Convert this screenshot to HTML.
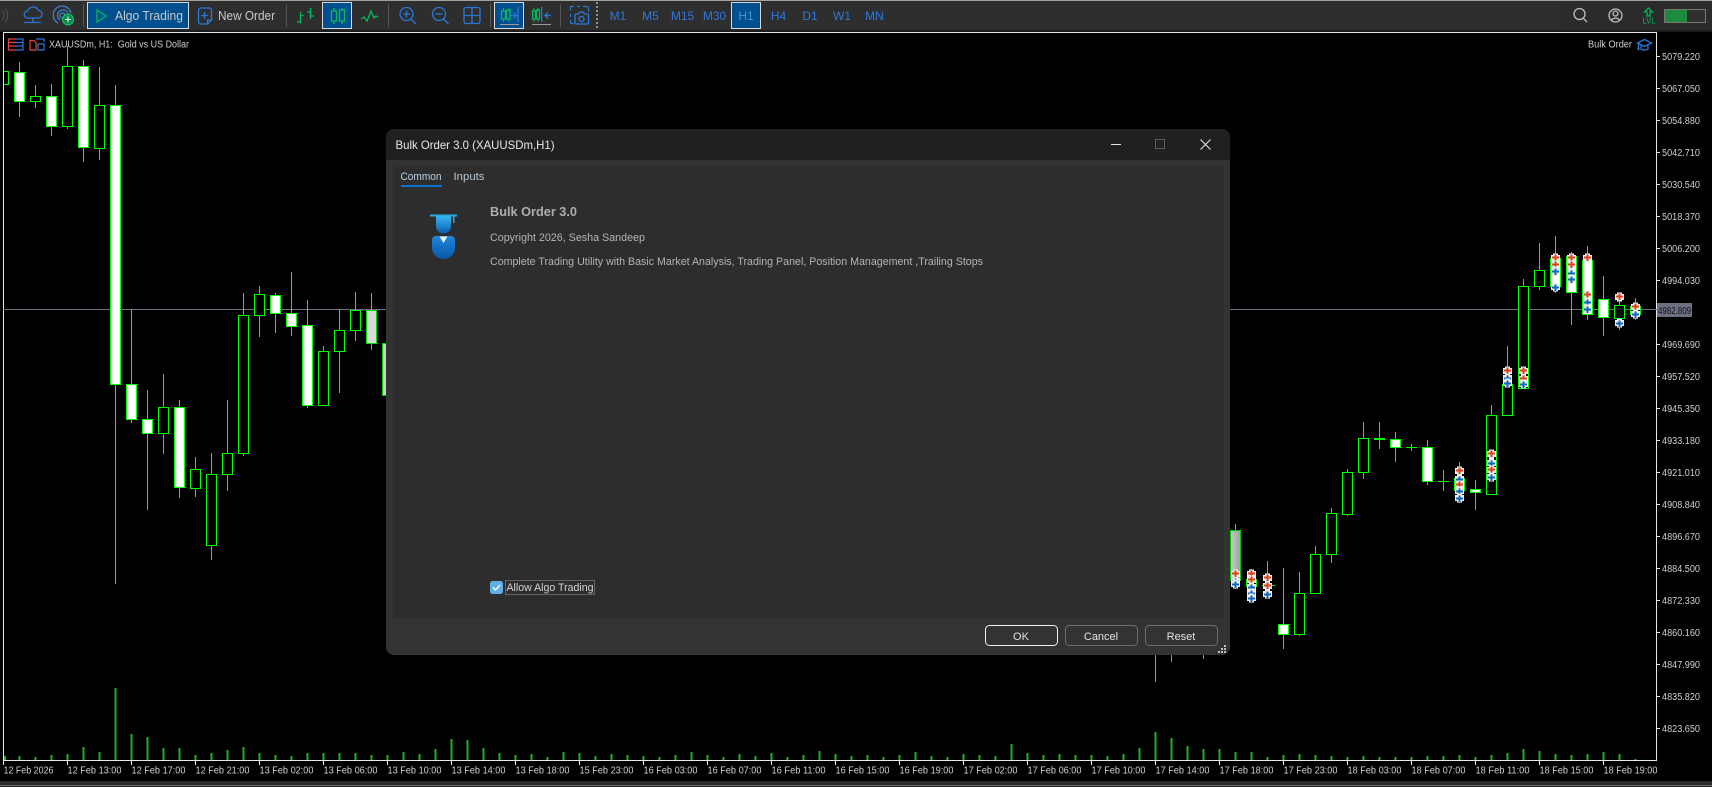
<!DOCTYPE html>
<html><head><meta charset="utf-8"><title>Bulk Order 3.0</title>
<style>html,body{margin:0;padding:0;background:#000;width:1712px;height:787px;overflow:hidden}svg{display:block}text{font-family:"Liberation Sans",sans-serif}</style></head>
<body>
<svg xmlns="http://www.w3.org/2000/svg" width="1712" height="787" viewBox="0 0 1712 787">
<defs>
<linearGradient id="g1" x1="0" x2="1"><stop offset="0" stop-color="#c8c8c8"/><stop offset="1" stop-color="#a0a0a0"/></linearGradient>
<linearGradient id="hd" x1="0" x2="0" y1="0" y2="1"><stop offset="0" stop-color="#35b4f0"/><stop offset="1" stop-color="#0a5cb0"/></linearGradient>
<linearGradient id="bd" x1="0" x2="0" y1="0" y2="1"><stop offset="0" stop-color="#1f86dc"/><stop offset="1" stop-color="#0a56a6"/></linearGradient>
<g id="r"><path d="M-2.500-4.500h5v1.500h2v6h-2v1.500h-5v-1.500h-2v-6h2z" fill="#eee"/><path d="M-1-3.500h2v2h2.500v2h-2.500v2.500h-2v-2.500h-2.500v-2h2.500z" fill="#e0401e"/></g>
<g id="b"><path d="M-2.500-4.500h5v1.500h2v6h-2v1.500h-5v-1.500h-2v-6h2z" fill="#eee"/><path d="M-1-2.500h2v2h2.500v2h-2.500v2.500h-2v-2.500h-2.500v-2h2.500z" fill="#0d66b8"/></g>
</defs>
<rect width="1712" height="787" fill="#000"/>

<!-- toolbar -->
<rect width="1712" height="30" fill="#2e2e2e"/>
<rect x="1560" width="152" height="30" fill="#2b2b2b"/>
<rect width="1712" height="1" fill="#a0a0a0"/>
<rect y="30" width="1712" height="2" fill="#1c1c1c"/>
<g shape-rendering="crispEdges">
<rect x="83" y="4" width="1" height="23" fill="#555"/><rect x="286" y="4" width="1" height="23" fill="#555"/><rect x="388" y="4" width="1" height="23" fill="#555"/><rect x="490" y="4" width="1" height="23" fill="#555"/><rect x="560" y="4" width="1" height="23" fill="#555"/>
<rect x="87.500" y="2.500" width="101" height="26" fill="#00508f" stroke="#d8d8d8"/>
<rect x="322.500" y="2.500" width="29" height="26" fill="#00508f" stroke="#d8d8d8"/>
<rect x="494.500" y="2.500" width="29" height="26" fill="#00508f" stroke="#d8d8d8"/>
<rect x="731.500" y="2.500" width="29" height="26" fill="#00508f" stroke="#d8d8d8"/>
</g>
<path d="M597 2v28" stroke="#b0b0b0" stroke-width="1.500" stroke-dasharray="2 2"/>
<path d="M2 11a6 6 0 0 1 0 9M5 9a9 9 0 0 1 0 13" stroke="#555" fill="none"/>
<g fill="none" stroke="#2a78d6" stroke-width="1.300">
<path d="M28 18a3.500 3.500 0 0 1-.500-7a6 6 0 0 1 11-.500a3.800 3.800 0 0 1 .500 7.500z"/><path d="M33 18v4M24 22.500h17"/>
<path d="M58 23a9 9 0 1 1 13-10M60 20a5.500 5.500 0 1 1 8-7M62 18a2.500 2.500 0 1 1 3-3" stroke="#3a7fc8"/>
<path d="M198.500 10a2 2 0 0 1 2-2h9a2 2 0 0 1 2 2v10l-4 4h-7a2 2 0 0 1-2-2zM207.500 24v-4h4M204.500 12v7M201 15.500h7"/>
<circle cx="406.500" cy="14" r="6.500"/><path d="M411 19l5 5M403 14h7M406.500 10.500v7"/>
<circle cx="439" cy="14" r="6.500"/><path d="M443.500 19l5 5M435.500 14h7"/>
<rect x="464" y="7.500" width="16" height="16" rx="2"/><path d="M472 7.500v16M464 15.500h16"/>
<path d="M518 7v15M510 15.500h6M513.500 12.500l3 3-3 3M541.700 7v15M551 15.500h-6M548 12.500l-3 3 3 3"/>
<path d="M574 6.500h-2.500a1 1 0 0 0-1 1v3M577 6.500h3M583 6.500h3.500a2 2 0 0 1 2 2v3M570.500 14v3M570.500 20v2.500a1 1 0 0 0 1 1h2" stroke-width="1.200"/>
<path d="M576 14h2.500l1.500-2h3l1.500 2h3a1 1 0 0 1 1 1v8a1 1 0 0 1-1 1h-11.500a1 1 0 0 1-1-1v-8a1 1 0 0 1 1-1z"/><circle cx="581.500" cy="19" r="2.500"/>
</g>
<g fill="none" stroke="#08b860" stroke-width="1.300">
<path d="M97 10l9 6-9 6z"/>
<path d="M300.500 12v11M297 22h3.500M300.500 15.500h3M310.500 8v11M307 12h3.500M310.500 16h3.500"/>
<path d="M334 8v3M334 21v3M342 8v2M342 21v3"/><rect x="331.500" y="11" width="5" height="10"/><rect x="339.500" y="10" width="5" height="11"/>
<path d="M361 19l3-2 3 4 4-10 3 7 2-2 2 1"/>
<path d="M503.500 8v3M503.500 19v3M509 8v3M509 19v3" stroke-width="1"/><rect x="501.500" y="11" width="4" height="8"/><rect x="506.500" y="10" width="3.500" height="9"/>
<path d="M534 8v3M534 19v3M538 8v3M538 19v3" stroke-width="1"/><rect x="532.500" y="11" width="3" height="8"/><rect x="536.500" y="10" width="3" height="9"/>
</g>
<path d="M500 24.500h19M532 24.500h19" stroke="#999" stroke-width="1"/>
<circle cx="68" cy="19.500" r="5.500" fill="#0c8a4c" stroke="#15c46c"/><path d="M68 16.500v6M65 19.500h6" stroke="#cfe" stroke-width="1"/>
<g font-size="13" fill="#c9c9c9">
<text x="115" y="20" textLength="68" lengthAdjust="spacingAndGlyphs">Algo Trading</text>
<text x="218" y="20" textLength="57" lengthAdjust="spacingAndGlyphs">New Order</text>
</g>
<g font-size="12" fill="#2f78dc" text-anchor="middle">
<text x="618" y="20">M1</text><text x="650.500" y="20">M5</text><text x="682.500" y="20">M15</text><text x="714.500" y="20">M30</text>
<text x="746" y="20" fill="#4a90e0">H1</text><text x="778.500" y="20">H4</text><text x="810" y="20">D1</text><text x="842" y="20">W1</text><text x="874.500" y="20">MN</text>
</g>
<g fill="none" stroke="#bdbdbd" stroke-width="1.300">
<circle cx="1579.500" cy="14" r="5.500"/><path d="M1583.500 18.500l3.500 3.500"/>
<circle cx="1615.500" cy="15.500" r="6.500"/><circle cx="1615.500" cy="13.500" r="2.500"/><path d="M1611 20.500a5 4 0 0 1 9 0"/>
</g>
<path d="M1648.500 8l4 4h-2.500v4h-3v-4h-2.500z" fill="none" stroke="#08b860" stroke-width="1.200"/>
<text x="1642.500" y="23.500" font-size="8" fill="#08b860" textLength="13" lengthAdjust="spacingAndGlyphs">LVL</text>
<g shape-rendering="crispEdges"><rect x="1664.500" y="9.500" width="41" height="13" fill="#2e2e2e" stroke="#777"/><rect x="1665" y="10" width="22" height="12" fill="#1e8a3c"/></g>

<!-- chart frame -->
<g shape-rendering="crispEdges">
<path d="M3.500 32.500H1656.500V760.500H3.500z" fill="#000" stroke="#e8e8e8"/>
<path d="M3 309.500H1657" stroke="#6c7080"/>
<path d="M3.500 760v5M67.500 760v5M131.500 760v5M195.500 760v5M259.500 760v5M323.500 760v5M387.500 760v5M451.500 760v5M515.500 760v5M579.500 760v5M643.500 760v5M707.500 760v5M771.500 760v5M835.500 760v5M899.500 760v5M963.500 760v5M1027.500 760v5M1091.500 760v5M1155.500 760v5M1219.500 760v5M1283.500 760v5M1347.500 760v5M1411.500 760v5M1475.500 760v5M1539.500 760v5M1603.500 760v5" stroke="#e8e8e8"/>
<path d="M1656 56.500h4M1656 88.500h4M1656 120.500h4M1656 152.500h4M1656 184.500h4M1656 216.500h4M1656 248.500h4M1656 280.500h4M1656 344.500h4M1656 376.500h4M1656 408.500h4M1656 440.500h4M1656 472.500h4M1656 504.500h4M1656 536.500h4M1656 568.500h4M1656 600.500h4M1656 632.500h4M1656 664.500h4M1656 696.500h4M1656 728.500h4" stroke="#e8e8e8"/>
<rect y="781" width="1712" height="6" fill="#2b2b2b"/><rect y="785" width="1712" height="1" fill="#666"/>

<!-- volumes -->
<path fill="none" stroke="#20b020" stroke-width="2" d="M5 760v-4M19.500 760v-4M35.500 760v-3M51.500 760v-5M67.500 760v-6M83.500 760v-13M99.500 760v-8M115.500 760v-72M131.500 760v-26M147.500 760v-23M163.500 760v-12M179.500 760v-12M195.500 760v-5M211.500 760v-7M227.500 760v-10M243.500 760v-13M259.500 760v-7M275.500 760v-5M291.500 760v-4M307.500 760v-7M323.500 760v-7M339.500 760v-7M355.500 760v-7M371.500 760v-5M387.500 760v-5M403.500 760v-8M419.500 760v-6M435.500 760v-11M451.500 760v-21M467.500 760v-20M483.500 760v-12M499.500 760v-7M515.500 760v-5M531.500 760v-6M547.500 760v-3M563.500 760v-8M579.500 760v-7M595.500 760v-4M611.500 760v-6M627.500 760v-5M643.500 760v-4M659.500 760v-3M675.500 760v-5M691.500 760v-8M707.500 760v-5M723.500 760v-3M739.500 760v-6M755.500 760v-4M771.500 760v-7M787.500 760v-3M803.500 760v-5M819.500 760v-9M835.500 760v-6M851.500 760v-4M867.500 760v-5M883.500 760v-3M899.500 760v-5M915.500 760v-8M931.500 760v-4M947.500 760v-3M963.500 760v-6M979.500 760v-5M995.500 760v-4M1011.500 760v-16M1027.500 760v-7M1043.500 760v-5M1059.500 760v-6M1075.500 760v-5M1091.500 760v-5M1107.500 760v-4M1123.500 760v-6M1139.500 760v-12M1155.500 760v-28M1171.500 760v-22M1187.500 760v-14M1203.500 760v-11M1219.500 760v-11M1235.500 760v-8M1251.500 760v-8M1267.500 760v-3M1283.500 760v-5M1299.500 760v-6M1315.500 760v-5M1331.500 760v-4M1347.500 760v-3M1363.500 760v-4M1379.500 760v-3M1395.500 760v-3M1411.500 760v-3M1427.500 760v-4M1443.500 760v-4M1459.500 760v-5M1475.500 760v-3M1491.500 760v-5M1507.500 760v-7M1523.500 760v-11M1539.500 760v-9M1555.500 760v-6M1571.500 760v-5M1587.500 760v-6M1603.500 760v-8M1619.500 760v-6M1635.500 760v-1"/>

<!-- wicks -->
<path fill="none" stroke="#00ff00" d="M19.500 62V117M35.500 85V108M51.500 84V136M67.500 46V129M83.500 60V162M99.500 67V160M115.500 85V584M131.500 309V423M147.500 390V510M163.500 374V454M179.500 400V498M195.500 457V497M211.500 453V560M227.500 400V491M243.500 293V456M259.500 286V337M275.500 293V333M291.500 272V336M307.500 300V408M323.500 346V405M339.500 309V393M355.500 292V341M371.500 293V350M1155.500 640V682M1171.500 640V662M1203.500 640V659M1235.500 524V589M1251.500 569V600M1267.500 561V598M1283.500 568V649M1299.500 572V636M1315.500 546V594M1331.500 508V563M1347.500 469V516M1363.500 422V479M1379.500 422V449M1395.500 432V462M1411.500 444V451M1427.500 440V485M1443.500 470V491M1459.500 462V503M1475.500 480V510M1491.500 405V495M1507.500 346V415M1523.500 279V388M1539.500 243V290M1555.500 236V293M1571.500 252V325M1587.500 246V320M1603.500 276V336M1619.500 293V330M1635.500 298V320"/>
<!-- hollow bodies -->
<path fill="#000" stroke="#00ff00" d="M4 71.500H8.500V84.500H4M30.500 96.500H40.500V101.500H30.500ZM62.500 66.500H72.500V126.500H62.500ZM94.500 105.500H104.500V148.500H94.500ZM158.500 407.500H168.500V433.500H158.500ZM190.500 469.500H200.500V488.500H190.500ZM206.500 474.500H216.500V545.500H206.500ZM222.500 453.500H232.500V474.500H222.500ZM238.500 315.500H248.500V453.500H238.500ZM254.500 294.500H264.500V315.500H254.500ZM318.500 351.500H328.500V405.500H318.500ZM334.500 330.500H344.500V351.500H334.500ZM350.500 310.500H360.500V330.500H350.500ZM1294.500 593.500H1304.500V634.500H1294.500ZM1310.500 554.500H1320.500V593.500H1310.500ZM1326.500 513.500H1336.500V554.500H1326.500ZM1342.500 472.500H1352.500V514.500H1342.500ZM1358.500 438.500H1368.500V472.500H1358.500ZM1454.500 478.500H1464.500V490.500H1454.500ZM1486.500 415.500H1496.500V494.500H1486.500ZM1502.500 384.500H1512.500V415.500H1502.500ZM1518.500 286.500H1528.500V388.500H1518.500ZM1534.500 270.500H1544.500V286.500H1534.500ZM1614.500 305.500H1624.500V318.500H1614.500ZM1630.500 306.500H1640.500V314.500H1630.500ZM1246.500 579.500H1256.500V586.500H1246.500Z"/>
<!-- white bodies -->
<path fill="#fff" stroke="#00ff00" d="M14.500 72.500H24.500V101.500H14.500ZM46.500 96.500H56.500V126.500H46.500ZM78.500 66.500H88.500V147.500H78.500ZM110.500 105.500H120.500V384.500H110.500ZM126.500 384.500H136.500V419.500H126.500ZM142.500 419.500H152.500V433.500H142.500ZM174.500 407.500H184.500V487.500H174.500ZM270.500 295.500H280.500V313.500H270.500ZM286.500 313.500H296.500V326.500H286.500ZM302.500 325.500H312.500V405.500H302.500ZM1278.500 624.500H1288.500V634.500H1278.500ZM1390.500 439.500H1400.500V447.500H1390.500ZM1422.500 447.500H1432.500V481.500H1422.500ZM1470.500 489.500H1480.500V492.500H1470.500ZM1550.500 258.500H1560.500V286.500H1550.500ZM1566.500 256.500H1576.500V292.500H1566.500ZM1582.500 260.500H1592.500V314.500H1582.500ZM1598.500 299.500H1608.500V317.500H1598.500Z"/>
<path fill="#d9d9d9" stroke="#00e000" d="M366.500 310.500H376.500V343.500H366.500Z"/>
<path fill="#d0d0d0" stroke="#00c800" d="M382.500 343.500H392.500V395.500H382.500Z"/>
<path fill="url(#g1)" stroke="#00c800" d="M1230.500 530.500H1240.500V580.500H1230.500Z"/>
<!-- dojis -->
<path fill="none" stroke="#00ff00" d="M1374 439.500H1385M1374 438.500H1385M1406 447.500H1417M1438 481.500H1449M1262 585.500H1275"/>
</g>

<!-- markers -->
<g>
<use href="#r" x="1251.500" y="574"/><use href="#r" x="1251.500" y="580"/><use href="#b" x="1251.500" y="587"/><use href="#b" x="1251.500" y="593"/><use href="#b" x="1251.500" y="598"/>
<use href="#r" x="1267.500" y="578"/><use href="#r" x="1267.500" y="586"/><use href="#b" x="1267.500" y="594"/>
<use href="#b" x="1235.500" y="581"/><use href="#b" x="1235.500" y="584"/><use href="#r" x="1235.500" y="574"/>
<use href="#r" x="1459.500" y="471"/><use href="#b" x="1459.500" y="479"/><use href="#r" x="1459.500" y="485"/><use href="#b" x="1459.500" y="491"/><use href="#b" x="1459.500" y="498"/>
<use href="#r" x="1491.500" y="454"/><use href="#b" x="1491.500" y="463"/><use href="#r" x="1491.500" y="470"/><use href="#b" x="1491.500" y="477"/>
<use href="#r" x="1507.500" y="371"/><use href="#b" x="1507.500" y="378"/><use href="#b" x="1507.500" y="383"/>
<use href="#r" x="1523.500" y="371"/><use href="#r" x="1523.500" y="379"/><use href="#b" x="1523.500" y="384"/>
<use href="#r" x="1555.500" y="258"/><use href="#r" x="1555.500" y="265"/><use href="#b" x="1555.500" y="271"/><use href="#b" x="1555.500" y="287"/>
<use href="#r" x="1571.500" y="258"/><use href="#r" x="1571.500" y="265"/><use href="#b" x="1571.500" y="273"/><use href="#b" x="1571.500" y="279"/>
<use href="#r" x="1587.500" y="258"/><use href="#r" x="1587.500" y="295"/><use href="#b" x="1587.500" y="302"/><use href="#b" x="1587.500" y="309"/>
<use href="#r" x="1619.500" y="297"/><use href="#b" x="1619.500" y="323"/>
<use href="#r" x="1635.500" y="307"/><use href="#b" x="1635.500" y="314"/>
</g>

<!-- chart header -->
<g fill="none" stroke-width="1.200">
<path d="M15.500 39h-7v11h7M8.500 42.500h7M8.500 46h7" stroke="#e8453c"/><path d="M15.500 39h7.500v11h-7.500M15.500 42.500h7.500M15.500 46h7.500" stroke="#2a78d6"/>
<path d="M30 40.500h4l2 2v7.500h-6z" stroke="#e8453c"/><path d="M38 44h6v6h-6zM38 39h6v3M36 39h2v-.100" stroke="#2a78d6"/>
</g>
<text x="49" y="47.500" font-size="10" fill="#cfcfcf" textLength="140" lengthAdjust="spacingAndGlyphs" xml:space="preserve">XAUUSDm, H1:  Gold vs US Dollar</text>
<text x="1588" y="47.500" font-size="10" fill="#cfcfcf" textLength="44" lengthAdjust="spacingAndGlyphs">Bulk Order</text>
<g fill="none" stroke="#2a78d6" stroke-width="1.300"><path d="M1637.500 43l7-3.500 7 3.500-7 3.500zM1641 45.500v3.500a4 2 0 0 0 7 0v-3.500M1638.500 44v4.500"/></g><circle cx="1638.500" cy="49" r="1.200" fill="#2a78d6"/>

<!-- price axis -->
<g font-size="10" fill="#cfcfcf">
<text x="1662" y="60" textLength="38" lengthAdjust="spacingAndGlyphs">5079.220</text>
<text x="1662" y="92" textLength="38" lengthAdjust="spacingAndGlyphs">5067.050</text>
<text x="1662" y="124" textLength="38" lengthAdjust="spacingAndGlyphs">5054.880</text>
<text x="1662" y="156" textLength="38" lengthAdjust="spacingAndGlyphs">5042.710</text>
<text x="1662" y="188" textLength="38" lengthAdjust="spacingAndGlyphs">5030.540</text>
<text x="1662" y="220" textLength="38" lengthAdjust="spacingAndGlyphs">5018.370</text>
<text x="1662" y="252" textLength="38" lengthAdjust="spacingAndGlyphs">5006.200</text>
<text x="1662" y="284" textLength="38" lengthAdjust="spacingAndGlyphs">4994.030</text>
<text x="1662" y="348" textLength="38" lengthAdjust="spacingAndGlyphs">4969.690</text>
<text x="1662" y="380" textLength="38" lengthAdjust="spacingAndGlyphs">4957.520</text>
<text x="1662" y="412" textLength="38" lengthAdjust="spacingAndGlyphs">4945.350</text>
<text x="1662" y="444" textLength="38" lengthAdjust="spacingAndGlyphs">4933.180</text>
<text x="1662" y="476" textLength="38" lengthAdjust="spacingAndGlyphs">4921.010</text>
<text x="1662" y="508" textLength="38" lengthAdjust="spacingAndGlyphs">4908.840</text>
<text x="1662" y="540" textLength="38" lengthAdjust="spacingAndGlyphs">4896.670</text>
<text x="1662" y="572" textLength="38" lengthAdjust="spacingAndGlyphs">4884.500</text>
<text x="1662" y="604" textLength="38" lengthAdjust="spacingAndGlyphs">4872.330</text>
<text x="1662" y="636" textLength="38" lengthAdjust="spacingAndGlyphs">4860.160</text>
<text x="1662" y="668" textLength="38" lengthAdjust="spacingAndGlyphs">4847.990</text>
<text x="1662" y="700" textLength="38" lengthAdjust="spacingAndGlyphs">4835.820</text>
<text x="1662" y="732" textLength="38" lengthAdjust="spacingAndGlyphs">4823.650</text>
</g>
<rect x="1657" y="303" width="35" height="14" fill="#6c7080"/>
<text x="1658" y="314" font-size="10" fill="#10121a" textLength="33" lengthAdjust="spacingAndGlyphs">4982.809</text>

<!-- time axis -->
<g font-size="10" fill="#cfcfcf">
<text x="3.500" y="773.500" textLength="50" lengthAdjust="spacingAndGlyphs">12 Feb 2026</text>
<text x="67.500" y="773.500" textLength="54" lengthAdjust="spacingAndGlyphs">12 Feb 13:00</text>
<text x="131.500" y="773.500" textLength="54" lengthAdjust="spacingAndGlyphs">12 Feb 17:00</text>
<text x="195.500" y="773.500" textLength="54" lengthAdjust="spacingAndGlyphs">12 Feb 21:00</text>
<text x="259.500" y="773.500" textLength="54" lengthAdjust="spacingAndGlyphs">13 Feb 02:00</text>
<text x="323.500" y="773.500" textLength="54" lengthAdjust="spacingAndGlyphs">13 Feb 06:00</text>
<text x="387.500" y="773.500" textLength="54" lengthAdjust="spacingAndGlyphs">13 Feb 10:00</text>
<text x="451.500" y="773.500" textLength="54" lengthAdjust="spacingAndGlyphs">13 Feb 14:00</text>
<text x="515.500" y="773.500" textLength="54" lengthAdjust="spacingAndGlyphs">13 Feb 18:00</text>
<text x="579.500" y="773.500" textLength="54" lengthAdjust="spacingAndGlyphs">15 Feb 23:00</text>
<text x="643.500" y="773.500" textLength="54" lengthAdjust="spacingAndGlyphs">16 Feb 03:00</text>
<text x="707.500" y="773.500" textLength="54" lengthAdjust="spacingAndGlyphs">16 Feb 07:00</text>
<text x="771.500" y="773.500" textLength="54" lengthAdjust="spacingAndGlyphs">16 Feb 11:00</text>
<text x="835.500" y="773.500" textLength="54" lengthAdjust="spacingAndGlyphs">16 Feb 15:00</text>
<text x="899.500" y="773.500" textLength="54" lengthAdjust="spacingAndGlyphs">16 Feb 19:00</text>
<text x="963.500" y="773.500" textLength="54" lengthAdjust="spacingAndGlyphs">17 Feb 02:00</text>
<text x="1027.500" y="773.500" textLength="54" lengthAdjust="spacingAndGlyphs">17 Feb 06:00</text>
<text x="1091.500" y="773.500" textLength="54" lengthAdjust="spacingAndGlyphs">17 Feb 10:00</text>
<text x="1155.500" y="773.500" textLength="54" lengthAdjust="spacingAndGlyphs">17 Feb 14:00</text>
<text x="1219.500" y="773.500" textLength="54" lengthAdjust="spacingAndGlyphs">17 Feb 18:00</text>
<text x="1283.500" y="773.500" textLength="54" lengthAdjust="spacingAndGlyphs">17 Feb 23:00</text>
<text x="1347.500" y="773.500" textLength="54" lengthAdjust="spacingAndGlyphs">18 Feb 03:00</text>
<text x="1411.500" y="773.500" textLength="54" lengthAdjust="spacingAndGlyphs">18 Feb 07:00</text>
<text x="1475.500" y="773.500" textLength="54" lengthAdjust="spacingAndGlyphs">18 Feb 11:00</text>
<text x="1539.500" y="773.500" textLength="54" lengthAdjust="spacingAndGlyphs">18 Feb 15:00</text>
<text x="1603.500" y="773.500" textLength="54" lengthAdjust="spacingAndGlyphs">18 Feb 19:00</text>
</g>

<!-- dialog -->
<rect x="386" y="129" width="844" height="526" rx="8" fill="#333"/>
<path d="M386 160V137a8 8 0 0 1 8-8H1222a8 8 0 0 1 8 8V160z" fill="#202020"/>
<rect x="393" y="167" width="831" height="451" fill="#2d2d2d"/>
<text x="395.500" y="149" font-size="12" fill="#e8e8e8" textLength="159" lengthAdjust="spacingAndGlyphs">Bulk Order 3.0 (XAUUSDm,H1)</text>
<path d="M1111 144.500h10" stroke="#e6e6e6" shape-rendering="crispEdges"/>
<rect x="1155.500" y="139.500" width="9" height="9" fill="none" stroke="#5c5c5c" shape-rendering="crispEdges"/>
<path d="M1200.500 139.500l10 10M1210.500 139.500l-10 10" stroke="#dcdcdc" stroke-width="1.200"/>
<text x="400.500" y="180" font-size="11" fill="#bcd0e0" textLength="41" lengthAdjust="spacingAndGlyphs">Common</text>
<text x="453.500" y="180" font-size="11" fill="#b8c4ce" textLength="31" lengthAdjust="spacingAndGlyphs">Inputs</text>
<rect x="401" y="185" width="41" height="2" fill="#0a72d0"/>

<!-- logo -->
<rect x="430" y="214.500" width="27" height="2" fill="#29abe2"/>
<rect x="453" y="216" width="1.500" height="7" fill="#29abe2"/>
<path d="M436 216.500h15v10a7.500 7 0 0 1-15 0z" fill="url(#hd)"/>
<path d="M432 240a4 4 0 0 1 4-4h15a4 4 0 0 1 4 4v8a11.500 11 0 0 1-23 0z" fill="url(#bd)"/>
<path d="M439.500 236.500h8l-4 6.500z" fill="#e8f4fc"/>

<text x="490" y="216" font-size="13" font-weight="bold" fill="#aeaeae" textLength="87" lengthAdjust="spacingAndGlyphs">Bulk Order 3.0</text>
<text x="490" y="241" font-size="11" fill="#b4b4b4" textLength="155" lengthAdjust="spacingAndGlyphs">Copyright 2026, Sesha Sandeep</text>
<text x="490" y="265" font-size="11" fill="#b4b4b4" textLength="493" lengthAdjust="spacingAndGlyphs">Complete Trading Utility with Basic Market Analysis, Trading Panel, Position Management ,Trailing Stops</text>

<rect x="490" y="581" width="13" height="13" rx="2.500" fill="#62aee6"/>
<path d="M493 587.500l2.500 2.500 4.500-5" fill="none" stroke="#fff" stroke-width="1.300"/>
<rect x="505.500" y="580.500" width="89" height="14" fill="none" stroke="#999" stroke-dasharray="1 1"/>
<text x="506.500" y="591" font-size="11" fill="#d4d4d4" textLength="87" lengthAdjust="spacingAndGlyphs">Allow Algo Trading</text>

<rect x="985.500" y="625.500" width="72" height="20" rx="4" fill="#333" stroke="#f0f0f0"/>
<rect x="1065.500" y="625.500" width="72" height="20" rx="4" fill="#333" stroke="#6e6e6e"/>
<rect x="1145.500" y="625.500" width="72" height="20" rx="4" fill="#333" stroke="#6e6e6e"/>
<g font-size="11" fill="#e0e0e0" text-anchor="middle">
<text x="1021" y="640">OK</text><text x="1101" y="640">Cancel</text><text x="1181" y="640">Reset</text>
</g>
<g fill="#bdbdbd" shape-rendering="crispEdges"><rect x="1224" y="645" width="2" height="2"/><rect x="1221" y="648" width="2" height="2"/><rect x="1224" y="648" width="2" height="2"/><rect x="1218" y="651" width="2" height="2"/><rect x="1221" y="651" width="2" height="2"/><rect x="1224" y="651" width="2" height="2"/></g>
</svg>
</body></html>
